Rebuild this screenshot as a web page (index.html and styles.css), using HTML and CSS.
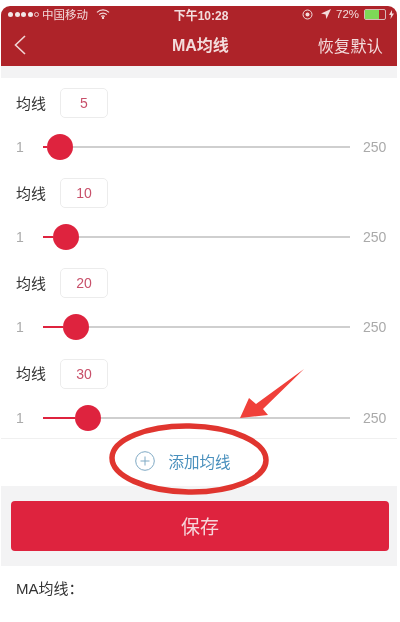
FILE: index.html
```html
<!DOCTYPE html>
<html>
	<head>
		<meta charset="UTF-8"/>
		<meta name="viewport" content="width=device-width, initial-scale=1.0"/>
		<title>MA均线</title>
		<link rel="stylesheet" href="styles.css">
	</head>
	<body>
		<div class="phone">
			<header>
				<div class="status-bar">
					<div class="status-left">
						<span class="signal"><i></i><i></i><i></i><i></i><i class="off"></i></span>
						<span>中国移动</span>
						<svg class="wifi" width="14" height="10" viewBox="0 0 14 10" fill="none" stroke="#f3dcdc" stroke-width="1.3">
							<path d="M1 3.4a8.6 8.6 0 0 1 12 0"/>
							<path d="M3.2 5.6a5.4 5.4 0 0 1 7.6 0"/>
							<path d="M5.3 7.6a2.5 2.5 0 0 1 3.4 0"/>
							<circle cx="7" cy="9" r=".5" fill="#f3dcdc"/>
						</svg>
					</div>
					<div class="status-time">下午10:28</div>
					<div class="status-right">
						<svg width="11" height="11" viewBox="0 0 11 11" fill="none" stroke="#f3dcdc">
							<circle cx="5.5" cy="5.5" r="4.5"/>
							<circle cx="5.5" cy="5.5" r="2" fill="#f3dcdc" stroke="none"/>
						</svg>
						<svg class="locate" width="10" height="10" viewBox="0 0 10 10"><path d="M10 0 0 4.6l4.6.8.8 4.6z" fill="#f3dcdc"/></svg>
						<span>72%</span>
						<span class="battery"><b></b></span>
						<svg width="5" height="9" viewBox="0 0 5 9"><path d="M3 0 0 5h2l-.5 4L5 3.6H3z" fill="#f3dcdc"/></svg>
					</div>
				</div>
				<nav class="nav-bar">
					<svg class="back" width="12" height="20" viewBox="0 0 12 20" fill="none" stroke="#f0d5d5" stroke-width="1.6"><path d="M11 1 1.5 10 11 19"/></svg>
					<div class="nav-title">MA均线</div>
					<div class="nav-reset">恢复默认</div>
				</nav>
			</header>

			<div class="gap-top"></div>

			<div class="ma-list">
				<div class="ma-row">
					<div class="ma-head"><span>均线</span><div class="ma-input">5</div></div>
					<div class="slider">
						<span class="min">1</span>
						<div class="track"><div class="fill" style="width: 4px"></div><div class="thumb"></div><div class="rest"></div></div>
						<span class="max">250</span>
					</div>
				</div>
				<div class="ma-row">
					<div class="ma-head"><span>均线</span><div class="ma-input">10</div></div>
					<div class="slider">
						<span class="min">1</span>
						<div class="track"><div class="fill" style="width: 10px"></div><div class="thumb"></div><div class="rest"></div></div>
						<span class="max">250</span>
					</div>
				</div>
				<div class="ma-row">
					<div class="ma-head"><span>均线</span><div class="ma-input">20</div></div>
					<div class="slider">
						<span class="min">1</span>
						<div class="track"><div class="fill" style="width: 20px"></div><div class="thumb"></div><div class="rest"></div></div>
						<span class="max">250</span>
					</div>
				</div>
				<div class="ma-row">
					<div class="ma-head"><span>均线</span><div class="ma-input">30</div></div>
					<div class="slider">
						<span class="min">1</span>
						<div class="track"><div class="fill" style="width: 32px"></div><div class="thumb"></div><div class="rest"></div></div>
						<span class="max">250</span>
					</div>
				</div>
			</div>

			<div class="add-line">
				<svg width="20" height="20" viewBox="0 0 20 20" fill="none" stroke="#7fa9c4" stroke-width="1">
					<circle cx="10" cy="10" r="9.3"/>
					<path d="M10 5.5v9M5.5 10h9"/>
				</svg>
				<span>添加均线</span>
			</div>

			<div class="save-wrap">
				<button class="save-btn">保存</button>
			</div>

			<div class="note">MA均线：</div>

			<!-- hand drawn markup on top of the screenshot -->
			<svg class="markup" width="396" height="520" viewBox="0 0 396 520" fill="none">
				<ellipse cx="188" cy="453" rx="77" ry="33" stroke="#e0352f" stroke-width="5.5" transform="rotate(1 188 453)"/>
				<path d="M239 412 248 392 255 398 303 363 262 403 267 409Z" fill="#f0403a"/>
			</svg>
		</div>
	</body>
</html>
```

FILE: styles.css
```css
body {
	margin: 0;
	background: #fff;
	font-family: "Liberation Sans", "Noto Sans CJK SC", sans-serif;
	color: #333;
}

.phone {
	position: relative;
	width: 396px;
	height: 616px;
	margin: 6px 0 0 1px;
	overflow: hidden;
	filter: blur(0.4px);
}

header {
	background: #ae2329;
	border-radius: 9px 9px 0 0;
	color: #f3dcdc;
}

.status-bar {
	display: flex;
	align-items: center;
	justify-content: space-between;
	height: 20px;
	padding: 0 3px 4px 7px;
	box-sizing: border-box;
	font-size: 11.5px;
}

.status-left, .status-right {
	display: flex;
	align-items: center;
	flex: 1;
}

.status-left .wifi {
	margin-left: 8px;
}

.status-right {
	justify-content: flex-end;
	gap: 5px;
}

.status-right .locate {
	margin-left: 3px;
}

.status-time {
	font-size: 12px;
	font-weight: bold;
}

.signal {
	display: flex;
	align-items: center;
	gap: 1.5px;
	margin-right: 3px;
}

.signal i {
	width: 5px;
	height: 5px;
	border-radius: 50%;
	background: #f3e6e6;
}

.signal i.off {
	width: 3px;
	height: 3px;
	background: none;
	border: 1px solid #e8c8c8;
}

.battery {
	width: 20px;
	height: 9px;
	border: 1px solid #d9b9b9;
	border-radius: 2px;
	margin-right: -2px;
}

.battery b {
	display: block;
	width: 72%;
	height: 100%;
	background: #7ed957;
}

.nav-bar {
	display: flex;
	align-items: center;
	justify-content: space-between;
	height: 40px;
	padding: 0 14px 2px 13px;
	box-sizing: border-box;
}

.nav-title {
	font-size: 16px;
	font-weight: bold;
	margin: 0 0 3px 57px;
}

.nav-reset {
	font-size: 16px;
	letter-spacing: 0.3px;
}

.gap-top {
	height: 12px;
	background: #f3f3f4;
}

.ma-list {
	height: 360px;
}

.ma-row {
	height: 90.2px;
	padding: 10px 0 0 15px;
	box-sizing: border-box;
}

.ma-head {
	display: flex;
	align-items: center;
	gap: 14px;
	font-size: 15px;
}

.ma-head span {
	margin-bottom: 2px;
}

.ma-input {
	width: 46px;
	height: 28px;
	line-height: 28px;
	border: 1px solid #ececec;
	border-radius: 5px;
	text-align: center;
	font-size: 14px;
	color: #c8506a;
}

.slider {
	display: flex;
	align-items: center;
	height: 26px;
	margin-top: 16px;
	padding-right: 9px;
	font-size: 14px;
	color: #aaa;
}

.min {
	width: 27px;
}

.max {
	width: 25px;
	margin-left: 13px;
}

.track {
	display: flex;
	align-items: center;
	flex: 1;
}

.fill {
	height: 2px;
	background: #de233e;
}

.thumb {
	width: 26px;
	height: 26px;
	border-radius: 50%;
	background: #de233e;
	flex: none;
}

.rest {
	flex: 1;
	height: 2px;
	background: #cfcfcf;
}

.add-line {
	display: flex;
	align-items: center;
	justify-content: center;
	gap: 13px;
	height: 48px;
	border-top: 1px solid #f0f0f0;
	box-sizing: border-box;
	font-size: 15.5px;
	color: #4a90bd;
	padding: 0 32px 4px 0;
}

.save-wrap {
	padding: 15px 8px 15px 10px;
	background: #f3f3f4;
}

.save-btn {
	display: block;
	width: 100%;
	height: 50px;
	padding: 0 0 1px;
	border: none;
	border-radius: 4px;
	background: #de233e;
	color: #f6d5da;
	font-family: inherit;
	font-size: 19px;
}

.note {
	padding: 11px 15px;
	font-size: 15px;
}

.markup {
	position: absolute;
	left: 0;
	top: 0;
}
```
